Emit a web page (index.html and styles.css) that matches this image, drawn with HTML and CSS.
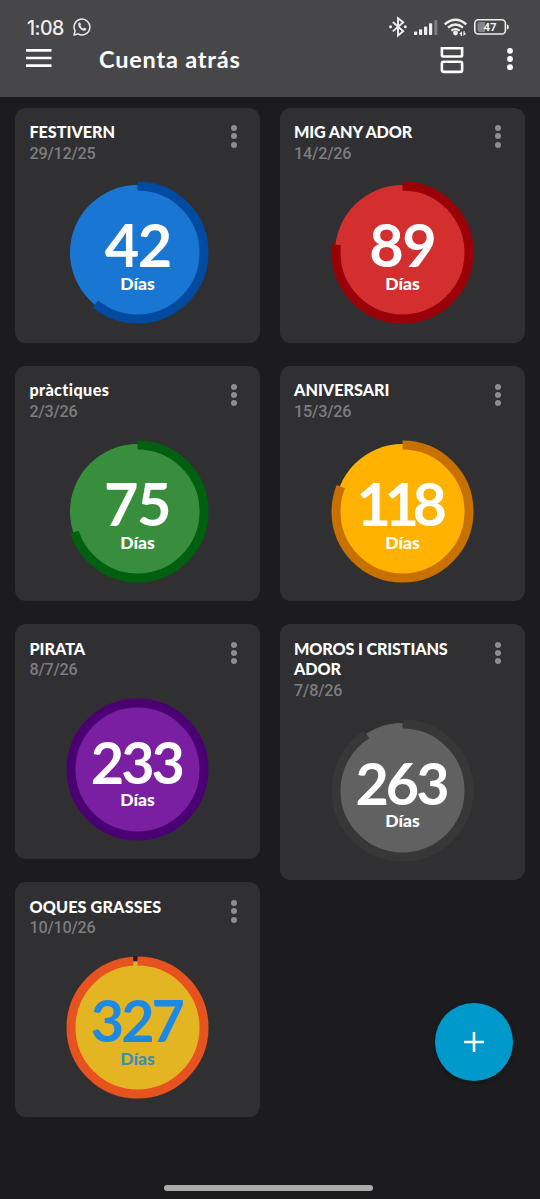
FILE: index.html
```html
<!DOCTYPE html>
<html lang="es">
<head>
<meta charset="utf-8">
<title>Cuenta atrás</title>
<link rel="stylesheet" href="styles.css">
</head>
<body>
<header class="header">
  <div class="status">
    <span class="clock">1:08</span>
    <svg class="whatsapp" width="18" height="18" viewBox="0 0 18 18"><path d="M1 17l1.1-4.1a7.9 7.9 0 1 1 3 3z" fill="none" stroke="#eee" stroke-width="1.5" stroke-linejoin="round"/><path d="M5.500 5.100c.7-1 1.600-.8 1.900 0l.5 1.300c.1.5-.7 1.100-.6 1.400.7 1.300 1.500 2 2.800 2.700.4.1.9-1 1.400-.8l1.500.8c.7.4-.1 2.100-1.500 2.300-3.300.2-7.200-4.300-6-7.700z" fill="#eee"/></svg>
    <svg class="status-icons" width="124" height="24" viewBox="386 15 124 24">
      <g fill="none" stroke="#eee" stroke-width="1.900">
        <path d="M392.800 22l10.400 9.200-5.200 4.200V18.200l5.200 4.100-10.400 9.100"/>
        <rect x="474.800" y="19.800" width="30.600" height="14.200" rx="3.600" stroke-width="1.600"/>
      </g>
      <g fill="#eee">
        <circle cx="390.600" cy="26.800" r="1.500"/><circle cx="405.300" cy="26.800" r="1.500"/>
        <rect x="414" y="31.600" width="3.200" height="3.400" rx=".8"/><rect x="419" y="29.200" width="3.200" height="5.800" rx=".8"/><rect x="424" y="26.600" width="3.200" height="8.400" rx=".8"/><rect x="429" y="23.300" width="3.200" height="11.700" rx=".8"/>
        <path d="M507 24.500c1.300.2 1.800 1 1.800 2.500s-.5 2.300-1.800 2.500z"/>
        <circle cx="455.500" cy="33" r="2.400"/>
        <path d="M462 31.300v4.700h-1.400v-1.700l-1.400-.5zM463.400 36v-4.700h1.300v1.700l1.500.5z"/>
      </g>
      <rect x="434.300" y="20" width="3" height="15" rx=".8" fill="#7d7c7f"/>
      <g fill="none" stroke="#eee" stroke-width="2.300"><path d="M444.700 24.400q10.800-9.400 21.600 0M448 27.600q7.500-6.300 15 0M451.300 30.700q4.200-3.200 8.400 0"/></g>
      <path d="M479.500 22H485v10h-5.500q-2-.2-2-2v-6q0-1.800 2-2z" fill="#858487"/>
      <text class="battery" x="490" y="31.200">47</text>
    </svg>
  </div>
  <div class="toolbar">
    <svg class="menu" width="26" height="20" viewBox="0 0 26 20"><path d="M0 2.300h25.500M0 10h25.500M0 17.700h25.500" stroke="#fff" stroke-width="2.700"/></svg>
    <h1 class="heading">Cuenta atrás</h1>
    <svg class="view" width="24" height="28" viewBox="0 0 24 28"><path d="M1.900 2.300v7q0 1.200 1.200 1.200h17.800q1.200 0 1.200-1.200v-7z" fill="none" stroke="#fff" stroke-width="2.600"/><rect x="1.900" y="15.700" width="20.200" height="10.200" rx="1.600" fill="none" stroke="#fff" stroke-width="2.600"/></svg>
    <svg class="options" width="6" height="24" viewBox="0 0 6 24" fill="#fff"><circle cx="3" cy="3.800" r="2.900"/><circle cx="3" cy="12" r="2.900"/><circle cx="3" cy="20.200" r="2.900"/></svg>
  </div>
</header>

<main class="board">
  <div class="column">
    <article class="card">
      <h2 class="name">FESTIVERN</h2><p class="date">29/12/25</p>
      <i class="more"><b></b><b></b><b></b></i>
      <svg class="dial" viewBox="-71.500 -71.500 143 143"><circle r="67.500" fill="#1976d2"/><circle class="ring" pathLength="360" stroke="#004ba0" stroke-dasharray="219.200 360"/><text class="count"><tspan class="num" x="0.300" y="14.500">42</tspan><tspan class="unit" x="0" y="37.500">Días</tspan></text></svg>
    </article>
    <article class="card">
      <h2 class="name wide">pràctiques</h2><p class="date">2/3/26</p>
      <i class="more"><b></b><b></b><b></b></i>
      <svg class="dial" viewBox="-71.500 -71.500 143 143"><circle r="67.500" fill="#388e3c"/><circle class="ring" pathLength="360" stroke="#00600f" stroke-dasharray="251.800 360"/><text class="count"><tspan class="num" x="-0.500" y="14.800">75</tspan><tspan class="unit" x="0" y="37.500">Días</tspan></text></svg>
    </article>
    <article class="card">
      <h2 class="name">PIRATA</h2><p class="date">8/7/26</p>
      <i class="more"><b></b><b></b><b></b></i>
      <svg class="dial" viewBox="-71.500 -71.500 143 143"><circle r="67.500" fill="#7b1fa2"/><circle class="ring" stroke="#4a0072"/><text class="count"><tspan class="num three" x="-1.200" y="14">233</tspan><tspan class="unit" x="0" y="36.600">Días</tspan></text></svg>
    </article>
    <article class="card">
      <h2 class="name loose">OQUES GRASSES</h2><p class="date">10/10/26</p>
      <i class="more"><b></b><b></b><b></b></i>
      <svg class="dial" viewBox="-71.500 -71.500 143 143"><circle r="66.500" fill="#e4b522" stroke="#4292b5" stroke-width="2"/><circle class="ring" pathLength="360" stroke="#e6531f" stroke-dasharray="356.300 360"/><path d="M-4-71.500h3.700v5H-4z" fill="#202022"/><text class="count"><tspan class="num three blue" x="-1.200" y="14.500">327</tspan><tspan class="unit muted" x="0" y="37.500">Días</tspan></text></svg>
    </article>
  </div>
  <div class="column">
    <article class="card">
      <h2 class="name tight">MIG ANY ADOR</h2><p class="date">14/2/26</p>
      <i class="more"><b></b><b></b><b></b></i>
      <svg class="dial" viewBox="-71.500 -71.500 143 143"><circle r="67.500" fill="#d32f2f"/><circle class="ring" pathLength="360" stroke="#9a0007" stroke-dasharray="276.800 360"/><text class="count"><tspan class="num" x="-0.300" y="14.500">89</tspan><tspan class="unit" x="0" y="37.500">Días</tspan></text></svg>
    </article>
    <article class="card">
      <h2 class="name">ANIVERSARI</h2><p class="date">15/3/26</p>
      <i class="more"><b></b><b></b><b></b></i>
      <svg class="dial" viewBox="-71.500 -71.500 143 143"><circle r="67.500" fill="#ffb300"/><circle class="ring" pathLength="360" stroke="#c67100" stroke-dasharray="292 360"/><text class="count"><tspan class="num narrow" x="-4" y="14.800">118</tspan><tspan class="unit" x="0" y="37.600">Días</tspan></text></svg>
    </article>
    <article class="card">
      <h2 class="name tight">MOROS I CRISTIANS<br>ADOR</h2><p class="date">7/8/26</p>
      <i class="more"><b></b><b></b><b></b></i>
      <svg class="dial" viewBox="-71.500 -71.500 143 143"><circle r="67.500" fill="#616161"/><circle class="ring" pathLength="360" stroke="#373737" stroke-dasharray="327.500 360"/><text class="count"><tspan class="num three" x="-1.500" y="14">263</tspan><tspan class="unit" x="0" y="36.600">Días</tspan></text></svg>
    </article>
  </div>
</main>

<button class="fab" aria-label="Añadir"><svg width="20" height="20" viewBox="0 0 20 20"><path d="M10 0v20M0 10h20" stroke="#fff" stroke-width="2.600"/></svg></button>
<div class="home-bar"></div>
</body>
</html>
```
FILE: styles.css
```css
* { box-sizing: border-box; margin: 0; padding: 0; }
body {
  display: flex;
  flex-direction: column;
  position: relative;
  height: 1199px;
  overflow: hidden;
  background: #1c1c1e;
  color: #fff;
  font-family: Lato, "Noto Sans", sans-serif;
}
.header { height: 97px; background: #474649; padding-top: 15px; }
.status { display: flex; align-items: center; height: 24px; padding: 0 30px 0 27px; }
.clock { width: 46px; font: 500 19.500px/24px Inter, sans-serif; color: #eee; letter-spacing: -0.500px; padding-top: 1px; }
.whatsapp { margin-bottom: 1px; }
.status-icons { margin-left: auto; }
.battery { font: 700 11.500px Roboto, sans-serif; fill: #eee; text-anchor: middle; }
.toolbar { display: flex; align-items: center; height: 40px; padding: 0 27.500px 0 26px; }
.menu { margin-bottom: 2px; }
.heading { margin-left: 47px; font-size: 23.500px; line-height: 28px; font-weight: 700; letter-spacing: 0.800px; }
.view { margin-left: auto; margin-right: 43px; margin-top: 2px; }

.board { display: flex; gap: 20px; padding: 10.500px 15.500px 0 15.200px; }
.column { flex: 1; display: flex; flex-direction: column; gap: 23.300px; }
.card {
  display: grid;
  grid-template-columns: 1fr 14px;
  align-content: start;
  min-height: 235px;
  padding: 14.500px 19.300px 17.900px 14.200px;
  border-radius: 11px;
  background: #303032;
}
.name { grid-column: 1; font-size: 16.200px; line-height: 20.600px; font-weight: 900; white-space: nowrap; }
.wide { letter-spacing: 0.400px; }
.loose { letter-spacing: 0.140px; }
.tight { letter-spacing: -0.140px; }
.date { grid-column: 1; padding-top: 1px; font: 500 16.200px/20.600px Roboto, sans-serif; letter-spacing: -0.200px; color: #7d7d7f; }
.more { grid-column: 2; grid-row: 1 / span 2; display: flex; flex-direction: column; align-items: center; gap: 2.200px; padding-top: 3.300px; }
.more b { width: 6px; height: 6px; border-radius: 50%; background: #8d8d8f; }
.dial { grid-column: 1 / -1; width: 143px; height: 143px; margin: 17.300px 0 0 36.900px; }
.ring { r: 66.500px; fill: none; stroke-width: 9px; transform: rotate(-90deg); }
.count { text-anchor: middle; font-size: 17px; }
.num { font-size: 59.500px; font-weight: 700; fill: #fff; letter-spacing: -1.500px; }
.three { font-size: 57.500px; letter-spacing: -3px; }
.narrow { letter-spacing: -6.500px; }
.unit { font-size: 17.500px; font-weight: 900; fill: #fff; letter-spacing: 0; }
.blue { fill: #1e88e5; }
.muted { fill: #3e8fb0; }

.fab {
  position: absolute;
  left: 435.300px;
  top: 1003.300px;
  display: flex;
  align-items: center;
  justify-content: center;
  width: 77.400px;
  height: 77.400px;
  border: 0;
  border-radius: 50%;
  background: #0099cc;
  box-shadow: 0 2px 4px rgba(0, 0, 0, 0.300);
}
.home-bar { position: absolute; left: 163.500px; bottom: 8.300px; width: 209px; height: 5.400px; border-radius: 3px; background: #acacac; }
```
